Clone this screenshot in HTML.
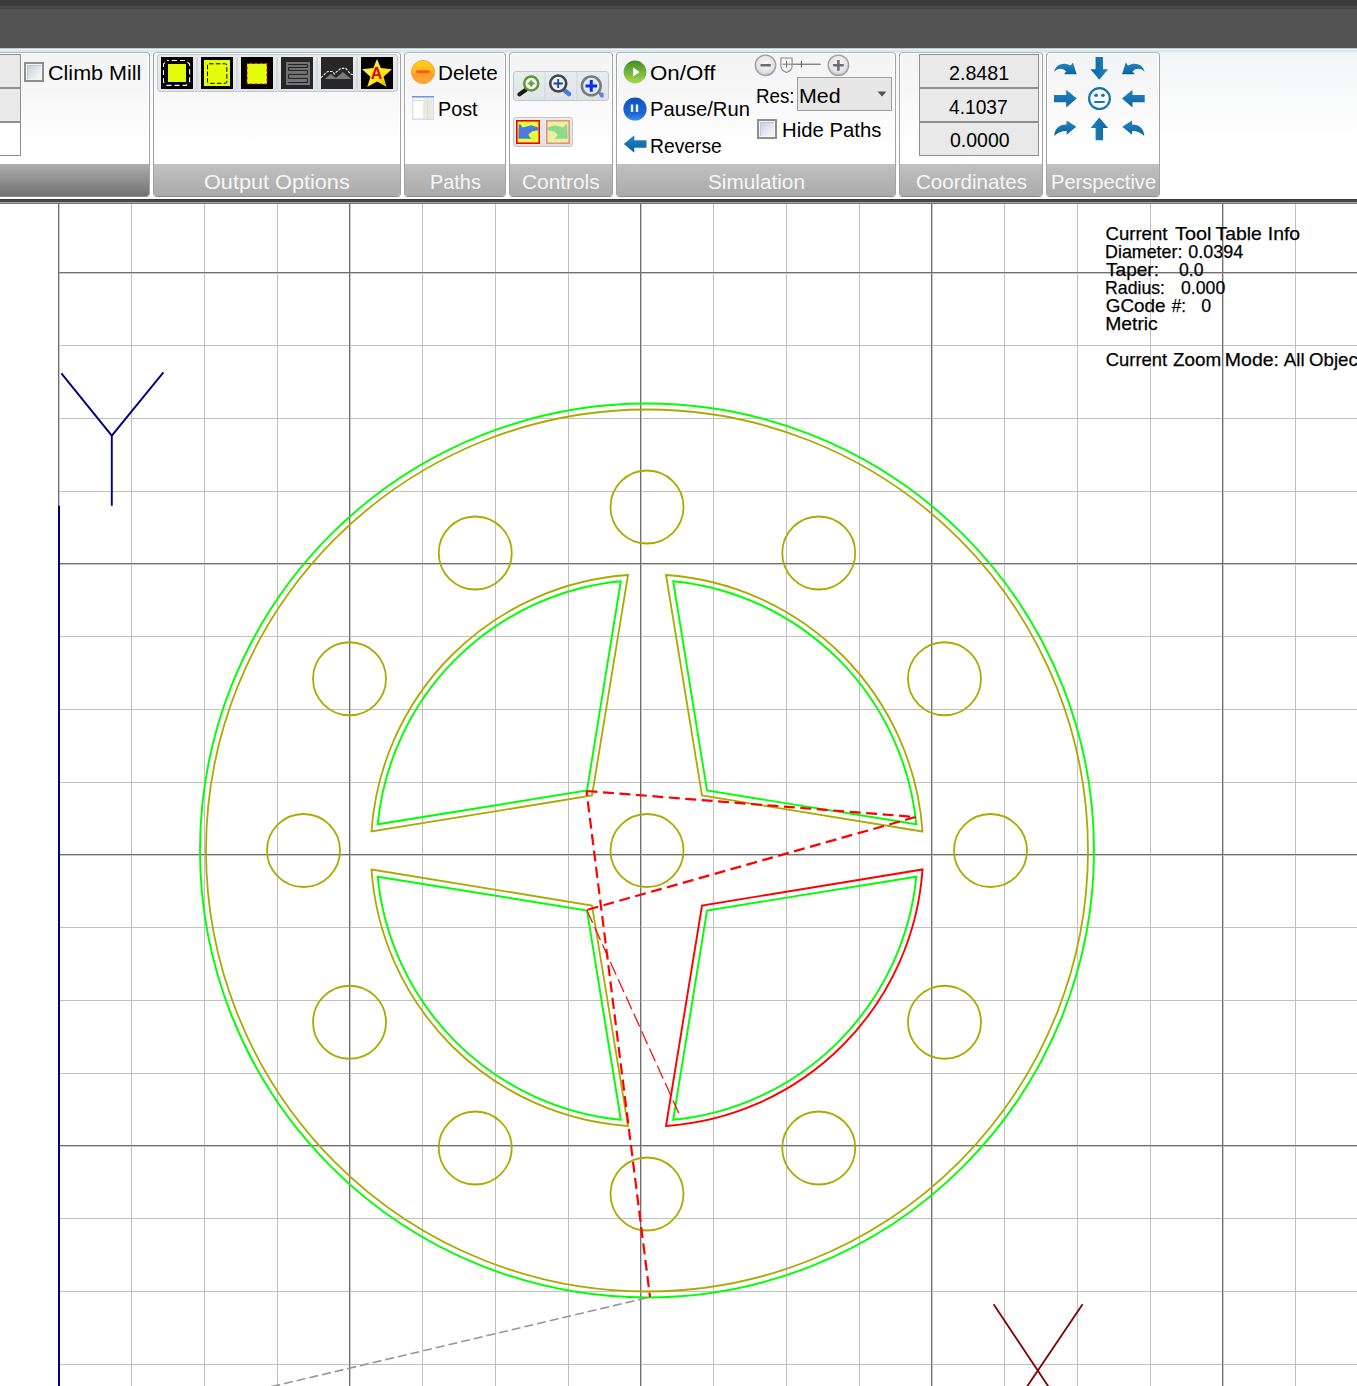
<!DOCTYPE html>
<html lang="en"><head><meta charset="utf-8"><title>CAM Simulation</title>
<style>
*{box-sizing:border-box;margin:0;padding:0}
html,body{width:1357px;height:1386px;overflow:hidden;background:#fff}
body{font-family:"Liberation Sans",sans-serif;color:#000}
#app{position:relative;width:1357px;height:1386px;overflow:hidden;background:#fff}
#top{position:absolute;left:0;top:0;width:1357px;height:49px;background:linear-gradient(#393939 0,#3e3e3e 5.6px,#494949 6.2px,#494949 7.6px,#424242 8.1px,#424242 8.9px,#545454 9.6px,#535353 14px,#535353 100%)}
#ribbon{position:absolute;left:0;top:48px;width:1357px;height:151px;background:linear-gradient(#8f9a9c 0,#eef4f5 1px,#eef4f5 2px,#d0e9f0 2px,#d6ecf2 4px,#f2f6f7 5px,#f6f7f8 20px,#fff 90px,#fff 100%)}
#sep{position:absolute;left:0;top:198px;width:1357px;height:6px;background:linear-gradient(#fff 0,#fff 1px,#3a3a3a 1px,#3a3a3a 2px,#484848 2px,#484848 4px,#a4a4a4 4px,#a4a4a4 5px,#747474 5px,#747474 6px)}
.pn{position:absolute;top:4px;height:145px;border:1px solid #a4a4a4;border-top-color:#b2b8b9;border-bottom-color:#8c8c8c;border-radius:4px;background:linear-gradient(#f3f4f5 0,#f6f6f7 30px,#fff 95px,#fff 100%);box-shadow:inset 0 0 0 1px #fff;overflow:hidden}
.pn .ft{position:absolute;left:0;right:0;top:111px;height:33px;background:linear-gradient(#c1c1c1,#a9a9a9);color:#f6f6f6;font-size:21px;line-height:33px;text-align:center;white-space:nowrap}
.pn.first{border-left:0;border-radius:0 4px 4px 0}
.pn.first .ft{background:linear-gradient(#aeaeae,#6f6f6f)}
.t{position:absolute;font-size:21px;line-height:24px;white-space:nowrap;transform-origin:0 0}
.t.fl{color:#f6f6f6}
.ab{position:absolute}
.cb{position:absolute;width:20px;height:20px;border:2px solid #8e8e8e;background:#f5f5f5}
.cb i{position:absolute;left:1px;top:1px;right:1px;bottom:1px;background:linear-gradient(135deg,#c6cad4 0,#d9dce3 35%,#eef0f3 75%,#f4f4f6 100%);box-shadow:inset 1px 1px 0 #c4c8d2}
.bx{position:absolute;background:#e9e9e9;border:1px solid #8f8f8f}
.strip{position:absolute;border:1px solid #c4c8cc;border-radius:3px;background:linear-gradient(#e9ecef,#dfe3e7)}
#cv .mi{stroke:#b9b9b9;stroke-width:1;shape-rendering:crispEdges}
#cv .ma{stroke:#727272;stroke-width:1.6}
#cv .nv path{stroke:#000080;stroke-width:1.9;fill:none}
#cv .mr path{stroke:#800000;stroke-width:1.8;fill:none}
#cv .ol circle,#cv path.ol{stroke:#acaa00;stroke-width:1.8;fill:none}
#cv .gr{stroke:#00ff00;stroke-width:1.9;fill:none}
#cv .rd{stroke:#ff0000;stroke-width:1.9;fill:none}
#cv .ds path{stroke:#ff0000;stroke-width:2.2;fill:none;stroke-dasharray:11 5.5}
#cv .ds path.th{stroke-width:1.2;stroke-dasharray:14 5}
#cv .gd{stroke:#969696;stroke-width:1.6;fill:none;stroke-dasharray:9 4}
#cv .tx text{font-family:"Liberation Sans",sans-serif;font-size:19px;fill:#000;stroke:#000;stroke-width:.25px}

</style></head>
<body>
<div id="app">
<div id="top"></div>
<div id="ribbon">
<svg width="0" height="0" style="position:absolute"><defs>
<linearGradient id="gbl" x1="0" y1="0" x2="0" y2="1"><stop offset="0" stop-color="#2185c5"/><stop offset="1" stop-color="#0d639a"/></linearGradient>
<linearGradient id="ggr" x1="0" y1="0" x2="0" y2="1"><stop offset="0" stop-color="#3f8f28"/><stop offset="1" stop-color="#a4d84e"/></linearGradient>
<linearGradient id="gpa" x1="0" y1="0" x2="0" y2="1"><stop offset="0" stop-color="#0f52b8"/><stop offset=".7" stop-color="#1c68d0"/><stop offset="1" stop-color="#3f8eea"/></linearGradient>
<linearGradient id="gor" x1="0" y1="0" x2="0" y2="1"><stop offset="0" stop-color="#ffd21e"/><stop offset=".55" stop-color="#ffb320"/><stop offset=".56" stop-color="#ff9a2e"/><stop offset="1" stop-color="#ffa83a"/></linearGradient>
<linearGradient id="gst" x1="0" y1="0" x2="1" y2="1"><stop offset="0" stop-color="#fff36a"/><stop offset=".6" stop-color="#ffe61e"/><stop offset="1" stop-color="#c9a800"/></linearGradient>
<radialGradient id="gbt" cx=".5" cy=".4" r=".6"><stop offset="0" stop-color="#fafafa"/><stop offset=".7" stop-color="#e4e4e6"/><stop offset="1" stop-color="#c4c4c8"/></radialGradient>
<path id="aR" d="M1 8.3H13.2V3.2L23.7 12L13.2 20.8V15.7H1Z"/>
<path id="aD" d="M1 14.7C2.5 8.5 9 4 17.7 8.4L19.9 5.5L23.7 17.3H11L13.2 14.4C9 10.5 4.5 11.5 1 14.7Z"/>
<path id="aC" d="M13.6 3.5L23.3 9.8L13.6 17.8V14C8 14 4 16 1.4 19C1.4 12 6 7.5 13.6 7.5Z"/>
</defs></svg>
<div class="pn first" style="left:-20px;width:170px">
  <div class="bx" style="left:-1px;top:1px;width:42px;height:34px"></div>
  <div class="bx" style="left:-1px;top:35px;width:42px;height:34px"></div>
  <div class="bx" style="left:-1px;top:69px;width:42px;height:34px;background:#fff"></div>
  <div class="cb" style="left:44px;top:9px"><i></i></div>
  <div class="t" style="left:67.57px;top:8.43px;transform:scaleX(1.0266)">Climb Mill</div>
  <div class="ft"></div>
</div>
<div class="pn" style="left:153px;width:248px">
  <div class="strip" style="left:3px;top:1px;width:241px;height:38px"></div>
  <svg class="ab" style="left:7px;top:4px" width="232" height="32" viewBox="0 0 232 32">
    <path d="M36 -2V34M76 -2V34M116 -2V34M156 -2V34M196 -2V34" stroke="#d3d7db" stroke-width="2"/>
    <g><rect width="32" height="32" fill="#000"/><rect x="7" y="7" width="18" height="18" fill="#e4fd0a"/><path d="M6 3.5H25.1L28.6 7V24.9L25.1 28.4H6L2.5 24.9V7Z" fill="none" stroke="#fff" stroke-width="1.1" stroke-dasharray="5 3.1" stroke-dashoffset="3.2"/></g>
    <g transform="translate(40)"><rect width="32" height="32" fill="#000"/><rect x="3" y="3" width="26" height="26" fill="#e4fd0a"/><rect x="6.5" y="6.8" width="19.3" height="19.5" rx="1.5" fill="none" stroke="#000" stroke-width="1" stroke-dasharray="4.6 2.2"/></g>
    <g transform="translate(80)"><rect width="32" height="32" fill="#000"/><rect x="6" y="6.5" width="20" height="20.5" fill="#e4fd0a" stroke="#d00000" stroke-width="1" stroke-dasharray="3 2"/></g>
    <g transform="translate(120)"><rect width="32" height="32" fill="#262626"/><rect x="5" y="5" width="24" height="23" fill="#747474"/><path d="M7.2 7.6H26.4V10.5H7.6V13.4H26.4V17.4H7.6V21.4H26.4V25.5H7.2" fill="none" stroke="#1e1e1e" stroke-width="1"/></g>
    <g transform="translate(160)"><rect width="32" height="32" fill="#272727"/><path d="M4 21.9L9.7 17L15 21.1L21.9 15L30.1 21.9Z" fill="#7c7c7c"/><path d="M0 20.7L5.4 15.4L7 14.5H11.8L13.4 17L15.5 14.8L17.6 13.3L20 11.4H24.8L29.6 17.1L32 17.6" fill="none" stroke="#f2f2f2" stroke-width="1.1" stroke-dasharray="2.6 1.2"/></g>
    <g transform="translate(200)"><rect width="32" height="32" fill="#000"/><path d="M16 2L19.8 10.9L31 12.3L22.6 19.8L25.6 29.9L16 24.6L6.2 29.9L9.4 19.8L1.1 12.3L12.3 10.9Z" fill="url(#gst)"/><text x="15.5" y="21.9" text-anchor="middle" font-family="Liberation Sans,sans-serif" font-weight="bold" font-size="16" fill="#e80000">A</text></g>
  </svg>
  <div class="ft"></div><div class="t fl" style="left:50.17px;top:116.93px;transform:scaleX(1.0319)">Output Options</div>
</div>
<div class="pn" style="left:404px;width:102px">
  <svg class="ab" style="left:6px;top:7px" width="24" height="24" viewBox="0 0 24 24"><circle cx="12" cy="12" r="11.6" fill="url(#gor)" stroke="#f0a020" stroke-width=".8"/><rect x="5.2" y="10.3" width="13.6" height="2.6" rx=".6" fill="#ff5a1e"/></svg>
  <svg class="ab" style="left:7px;top:43px" width="22" height="24" viewBox="0 0 22 24"><rect x=".5" y=".5" width="21" height="23" fill="#f0f0ea" stroke="#d4dcec" stroke-width="1"/><rect x="0" y="0" width="22" height="1.5" fill="#6a98ea"/><rect x="1.5" y="2.5" width="9" height="19" fill="#fff"/><rect x="1.5" y="4" width="9" height="1" fill="#c4d6f4"/><rect x="11.5" y="2.5" width="9" height="20.5" fill="#e9e9e1"/><rect x="15" y="2.5" width="1" height="20.5" fill="#dedfd8"/></svg>
  <div class="t" style="left:33.31px;top:8.23px;transform:scaleX(0.9860)">Delete</div>
  <div class="t" style="left:33.36px;top:44.03px;transform:scaleX(0.9396)">Post</div>
  <div class="ft"></div><div class="t fl" style="left:24.85px;top:116.93px;transform:scaleX(0.9464)">Paths</div>
</div>
<div class="pn" style="left:509px;width:104px">
  <div class="strip" style="left:3px;top:18px;width:96px;height:30px"></div>
  <svg class="ab" style="left:4px;top:19px" width="96" height="28" viewBox="0 0 96 28">
    <path d="M31 0V28M63 0V28" stroke="#d0d4d8" stroke-width="1"/>
    <g><path d="M11.6 18L5.4 22.4" stroke="#1c1c1c" stroke-width="4.2" stroke-linecap="round"/><circle cx="17.2" cy="11.5" r="7" fill="#fff" stroke="#5a9a32" stroke-width="2.6"/><path d="M17.2 7.3L18.7 10L21.4 11.5L18.7 13L17.2 15.7L15.7 13L13 11.5L15.7 10Z" fill="#5fa83a"/></g>
    <g><path d="M50.4 18.3L55 22" stroke="#4a7ce0" stroke-width="4.6" stroke-linecap="round"/><circle cx="44.2" cy="11.5" r="8" fill="#e6f0fa" stroke="#444" stroke-width="2.6"/><path d="M39.6 11.5H48.8M44.2 6.9V16.1" stroke="#1c3f8c" stroke-width="1.8"/></g>
    <g><path d="M83.5 19.5L89.6 21V25.6H86.5Z" fill="#5a86e4"/><circle cx="77.3" cy="13.9" r="9.4" fill="#dfe8f4" stroke="#7a7a7a" stroke-width="2.6"/><path d="M71.5 13.9H83.1M77.3 8.1V19.7" stroke="#0030e6" stroke-width="3"/></g>
  </svg>
  <div class="strip" style="left:3px;top:64px;width:60px;height:30px"></div>
  <svg class="ab" style="left:6px;top:67px" width="56" height="24" viewBox="0 0 56 24">
    <rect x=".8" y=".8" width="22.4" height="22.4" fill="#ecff3c" stroke="#f40000" stroke-width="1.6"/>
    <path d="M2.8 4.4L4 4L6.8 7.6L15.1 5.2L22.4 7.6V10.2L15.9 11.5L12.3 14.7L15.1 18.7H2.4Z" fill="#4c7be0"/>
    <g transform="translate(30)"><rect x=".8" y=".8" width="22.4" height="22.4" fill="#e6f3a2" stroke="#f08270" stroke-width="1.4"/>
    <path d="M21.2 4.4L20 4L17.2 7.6L8.9 5.2L1.6 7.6V10.2L8.1 11.5L11.7 14.7L8.9 18.7H21.6Z" fill="#8fd88c"/></g>
  </svg>
  <div class="ft"></div><div class="t fl" style="left:12.31px;top:116.93px;transform:scaleX(0.9935)">Controls</div>
</div>
<div class="pn" style="left:616px;width:280px">
  <svg class="ab" style="left:6px;top:7px" width="24" height="24" viewBox="0 0 24 24"><circle cx="12" cy="12" r="11.4" fill="url(#ggr)"/><path d="M10 7.5L16.6 12L10 16.5Z" fill="#fff"/></svg>
  <svg class="ab" style="left:6px;top:43.5px" width="24" height="24" viewBox="0 0 24 24"><circle cx="12" cy="12" r="11.6" fill="url(#gpa)"/><path d="M9 7.6V15M14 7.6V15" stroke="#e4efff" stroke-width="2.4"/></svg>
  <svg class="ab" style="left:6px;top:79px" width="24" height="24" viewBox="0 0 24 24"><use href="#aR" fill="url(#gbl)" transform="matrix(-1 0 0 1 24.5 0)"/></svg>
  <div class="t" style="left:33.24px;top:8.33px;transform:scaleX(1.0637)">On/Off</div>
  <div class="t" style="left:33.34px;top:44.43px;transform:scaleX(0.9616)">Pause/Run</div>
  <div class="t" style="left:33.38px;top:80.53px;transform:scaleX(0.9174)">Reverse</div>
  <svg class="ab" style="left:136px;top:0px" width="100" height="24" viewBox="0 0 100 24">
    <circle cx="12.5" cy="12.3" r="10.2" fill="url(#gbt)" stroke="#a0a0a4" stroke-width="1.4"/><path d="M7.5 12.3H17.8" stroke="#6c6c78" stroke-width="2.6"/>
    <circle cx="85.4" cy="12.3" r="10.2" fill="url(#gbt)" stroke="#a0a0a4" stroke-width="1.4"/><path d="M80 12.3H90.8M85.4 6.9V17.7" stroke="#6c6c78" stroke-width="2.6"/>
    <path d="M39.6 11.2H67.7M48.4 7.8V14.6" stroke="#555" stroke-width="1"/>
    <path d="M27.9 5H39.1V13Q39.1 17.5 33.5 19.4Q27.9 17.5 27.9 13Z" fill="#f2f2f2" stroke="#8a8a8a" stroke-width="1.1"/><path d="M33.5 7.8V14.6M29.5 11.2H39" stroke="#777" stroke-width="1"/>
  </svg>
  <div class="t" style="left:139.31px;top:30.53px;transform:scaleX(0.8923)">Res:</div>
  <div class="bx" style="left:180px;top:24px;width:95px;height:34px;border-color:#9e9e9e;background:#e7e7e7"></div>
  <svg class="ab" style="left:260px;top:38px" width="10" height="6" viewBox="0 0 10 6"><path d="M.5 .5H9.5L5 5.5Z" fill="#555"/></svg>
  <div class="t" style="left:182.28px;top:30.53px;transform:scaleX(1.0186)">Med</div>
  <div class="cb" style="left:140px;top:66px"><i></i></div>
  <div class="t" style="left:164.63px;top:64.83px;transform:scaleX(0.9672)">Hide Paths</div>
  <div class="ft"></div><div class="t fl" style="left:90.70px;top:116.93px;transform:scaleX(0.9890)">Simulation</div>
</div>
<div class="pn" style="left:899px;width:144px">
  <div class="bx" style="left:19px;top:1px;width:120px;height:34px"></div>
  <div class="bx" style="left:19px;top:35px;width:120px;height:34px"></div>
  <div class="bx" style="left:19px;top:69px;width:120px;height:34px"></div>
  <div class="t" style="left:48.56px;top:7.63px;transform:scaleX(0.9352)">2.8481</div>
  <div class="t" style="left:49.00px;top:41.73px;transform:scaleX(0.9126)">4.1037</div>
  <div class="t" style="left:49.50px;top:75.43px;transform:scaleX(0.9268)">0.0000</div>
  <div class="ft"></div><div class="t fl" style="left:15.52px;top:116.93px;transform:scaleX(0.9800)">Coordinates</div>
</div>
<div class="pn" style="left:1046px;width:114px">
  <svg class="ab" style="left:6px;top:-1px" width="96" height="92" viewBox="0 0 96 92" fill="url(#gbl)">
    <use href="#aD" transform="translate(0 5)"/>
    <use href="#aR" transform="translate(34.3 4) rotate(90 12 12)"/>
    <use href="#aD" transform="translate(92.7 5) scale(-1 1)"/>
    <use href="#aR" transform="translate(0 34.6)"/>
    <g transform="translate(46.5 46.6)"><circle r="10.4" fill="none" stroke="#1575b2" stroke-width="2.2"/><circle cx="-3.4" cy="-3.3" r="1.8"/><circle cx="3.4" cy="-3.3" r="1.8"/><path d="M-5.2 3.4H5.2" stroke="#1575b2" stroke-width="2.2"/></g>
    <use href="#aR" transform="translate(92.7 34.6) scale(-1 1)"/>
    <use href="#aC" transform="translate(0 65)"/>
    <use href="#aR" transform="translate(34.3 65.2) rotate(-90 12 12)"/>
    <use href="#aC" transform="translate(92.6 65) scale(-1 1)"/>
  </svg>
  <div class="ft"></div><div class="t fl" style="left:3.84px;top:116.93px;transform:scaleX(0.9580)">Perspective</div>
</div>

</div>
<div id="sep"></div>
<svg id="cv" width="1357" height="1182" viewBox="0 204 1357 1182" style="position:absolute;left:0;top:204px">
<g shape-rendering="crispEdges">
<path fill="#c0c0c0" d="M131 200h1V1386h-1zM204 200h1V1386h-1zM277 200h1V1386h-1zM422 200h1V1386h-1zM495 200h1V1386h-1zM568 200h1V1386h-1zM713 200h1V1386h-1zM786 200h1V1386h-1zM859 200h1V1386h-1zM1004 200h1V1386h-1zM1077 200h1V1386h-1zM1150 200h1V1386h-1zM1295 200h1V1386h-1zM58 200H1357v1H58zM58 345H1357v1H58zM58 418H1357v1H58zM58 491H1357v1H58zM58 636H1357v1H58zM58 709H1357v1H58zM58 782H1357v1H58zM58 927H1357v1H58zM58 1000H1357v1H58zM58 1073H1357v1H58zM58 1218H1357v1H58zM58 1291H1357v1H58zM58 1364H1357v1H58z"/>
<path fill="#c8c8c8" d="M59 200h1V1386h-1zM350 200h1V1386h-1zM641 200h1V1386h-1zM932 200h1V1386h-1zM1223 200h1V1386h-1zM58 273H1357v1H58zM58 564H1357v1H58zM58 855H1357v1H58zM58 1146H1357v1H58z"/>
<path fill="#707070" d="M58 200h1V1386h-1zM349 200h1V1386h-1zM640 200h1V1386h-1zM931 200h1V1386h-1zM1222 200h1V1386h-1zM58 272H1357v1H58zM58 563H1357v1H58zM58 854H1357v1H58zM58 1145H1357v1H58z"/>
</g>
<g class="nv"><path d="M61.4 373.4L111.8 435.7L163.4 372.3M111.8 435.7V505.8"/><path d="M59 505.8V1386" style="stroke-width:2"/></g>
<g class="mr"><path d="M993.6 1304.2L1057.4 1400M1082.6 1304.2L1018 1400"/></g>
<g class="ol">
<circle cx="647" cy="850.5" r="441"/>
<circle cx="647" cy="850.5" r="36.5"/>
<circle cx="647" cy="507" r="36.5"/>
<circle cx="818.75" cy="553.02" r="36.5"/>
<circle cx="944.48" cy="678.75" r="36.5"/>
<circle cx="990.5" cy="850.5" r="36.5"/>
<circle cx="944.48" cy="1022.25" r="36.5"/>
<circle cx="818.75" cy="1147.98" r="36.5"/>
<circle cx="647" cy="1194" r="36.5"/>
<circle cx="475.25" cy="1147.98" r="36.5"/>
<circle cx="349.52" cy="1022.25" r="36.5"/>
<circle cx="303.5" cy="850.5" r="36.5"/>
<circle cx="349.52" cy="678.75" r="36.5"/>
<circle cx="475.25" cy="553.02" r="36.5"/>
</g>
<circle class="gr" cx="647" cy="850.5" r="447"/>
<path class="ol" d="M628 575L592 795.5L371.5 831.5A276.2 276.2 0 0 1 628 575Z"/>
<path class="gr" d="M620.8 581.2L587 790.5L377.7 824.3A270.6 270.6 0 0 1 620.8 581.2Z"/>
<path class="ol" d="M922.5 831.5L702 795.5L666 575A276.2 276.2 0 0 1 922.5 831.5Z"/>
<path class="gr" d="M916.3 824.3L707 790.5L673.2 581.2A270.6 270.6 0 0 1 916.3 824.3Z"/>
<path class="rd" d="M666 1126L702 905.5L922.5 869.5A276.2 276.2 0 0 1 666 1126Z"/>
<path class="gr" d="M673.2 1119.8L707 910.5L916.3 876.7A270.6 270.6 0 0 1 673.2 1119.8Z"/>
<path class="ol" d="M371.5 869.5L592 905.5L628 1126A276.2 276.2 0 0 1 371.5 869.5Z"/>
<path class="gr" d="M377.7 876.7L587 910.5L620.8 1119.8A270.6 270.6 0 0 1 377.7 876.7Z"/>
<g class="ds">
<path d="M586.5 791L915.6 817L586.8 910"/>
<path d="M586.5 791L650 1297" stroke-dashoffset="6"/>
<path class="th" d="M586.8 910L678.7 1113"/>
</g>
<path class="gd" d="M647 1297.8L220 1398.8"/>
<g class="tx">
<text y="239.9"><tspan x="1105.62" textLength="61.75" lengthAdjust="spacingAndGlyphs">Current</tspan> <tspan x="1175.08" textLength="36.39" lengthAdjust="spacingAndGlyphs">Tool</tspan> <tspan x="1215.59" textLength="46.19" lengthAdjust="spacingAndGlyphs">Table</tspan> <tspan x="1267.77" textLength="32.32" lengthAdjust="spacingAndGlyphs">Info</tspan></text>
<text y="258"><tspan x="1105.09" textLength="77.28" lengthAdjust="spacingAndGlyphs">Diameter:</tspan> <tspan x="1188.34" textLength="54.8" lengthAdjust="spacingAndGlyphs">0.0394</tspan></text>
<text y="275.9"><tspan x="1106.1" textLength="52.88" lengthAdjust="spacingAndGlyphs">Taper:</tspan> <tspan x="1179.05" textLength="24.47" lengthAdjust="spacingAndGlyphs">0.0</tspan></text>
<text y="293.7"><tspan x="1105.11" textLength="59.85" lengthAdjust="spacingAndGlyphs">Radius:</tspan> <tspan x="1181.05" textLength="44.17" lengthAdjust="spacingAndGlyphs">0.000</tspan></text>
<text y="311.7"><tspan x="1105.81" textLength="59.75" lengthAdjust="spacingAndGlyphs">GCode</tspan> <tspan x="1171.7" textLength="14.2" lengthAdjust="spacingAndGlyphs">#:</tspan> <tspan x="1201.15" textLength="9.88" lengthAdjust="spacingAndGlyphs">0</tspan></text>
<text y="329.8"><tspan x="1105.17" textLength="52.64" lengthAdjust="spacingAndGlyphs">Metric</tspan></text>
<text y="366.1"><tspan x="1105.83" textLength="61.35" lengthAdjust="spacingAndGlyphs">Current</tspan> <tspan x="1173.01" textLength="48.11" lengthAdjust="spacingAndGlyphs">Zoom</tspan> <tspan x="1224.86" textLength="54.16" lengthAdjust="spacingAndGlyphs">Mode:</tspan> <tspan x="1283.8" textLength="20.91" lengthAdjust="spacingAndGlyphs">All</tspan> <tspan x="1309.12" textLength="63.12" lengthAdjust="spacingAndGlyphs">Objects</tspan></text>
</g>
</svg>
</div>
</body></html>
